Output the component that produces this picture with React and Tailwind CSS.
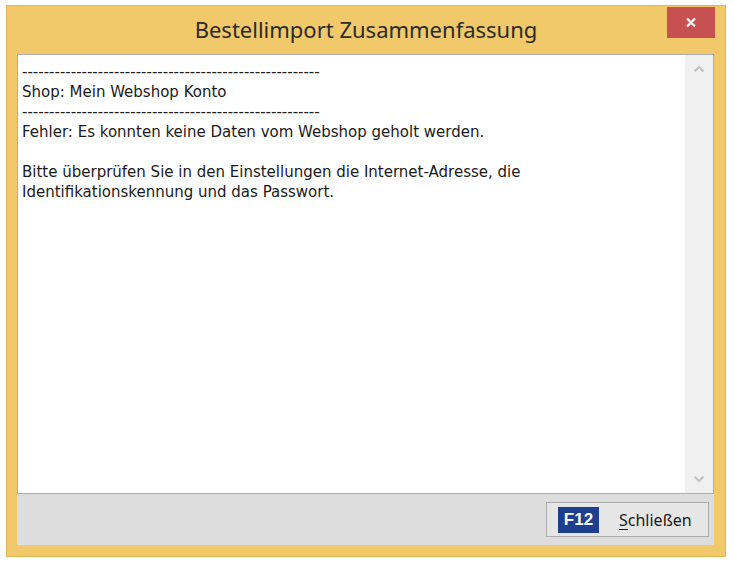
import React from 'react';

// Bestellimport summary dialog (Windows 8 style frame)
const dashes = "-".repeat(55);
const lines = [
    dashes,
    "Shop: Mein Webshop Konto",
    dashes,
    "Fehler: Es konnten keine Daten vom Webshop geholt werden.",
    "",
    "Bitte überprüfen Sie in den Einstellungen die Internet-Adresse, die",
    "Identifikationskennung und das Passwort.",
];

function Chevron({ down }) {
    return (
        <svg width="12" height="8" viewBox="0 0 12 8" className="text-[#c2c2c2]">
            <path
                d={down ? "M1.5 1.5 L6 6 L10.5 1.5" : "M1.5 6.5 L6 2 L10.5 6.5"}
                fill="none"
                stroke="currentColor"
                strokeWidth="2"
            />
        </svg>
    );
}

export default function App() {
    return (
        <div className="w-[734px] h-[564px] bg-white pt-[5px] pl-[6px]">
            <div className="w-[720px] h-[552px] bg-[#f1c86a] border border-[#dfb555] flex flex-col">
                {/* title bar */}
                <div className="relative h-[48px] flex items-center justify-center">
                    <span className="text-[22px] text-[#2b2b2b] font-['Noto_Sans',sans-serif] leading-none pb-[2px]">
                        Bestellimport Zusammenfassung
                    </span>
                    <div className="absolute top-[1px] right-[10px] w-[48px] h-[31px] bg-[#c75050] flex items-center justify-center">
                        <svg width="12" height="11" viewBox="0 0 12 11">
                            <path d="M2 1.5 L10 9.5 M10 1.5 L2 9.5" stroke="white" strokeWidth="2.2" />
                        </svg>
                    </div>
                </div>

                {/* body */}
                <div className="flex-1 ml-[10px] mr-[11px] flex flex-col">
                    <div className="flex-1 flex bg-white border border-[#abadb3]">
                        <div className="flex-1 pl-[4px] pt-[7px] font-['DejaVu_Sans',sans-serif] text-[15px] leading-[20px] text-[#1a1a1a]">
                            {lines.map((l, i) => (
                                <div key={i} className="h-[20px] whitespace-pre">{l}</div>
                            ))}
                        </div>
                        <div className="w-[28px] bg-[#f0f0f0] flex flex-col justify-between items-center py-[10px]">
                            <Chevron />
                            <Chevron down />
                        </div>
                    </div>
                    <div className="h-[51px] bg-[#dddddd] flex items-center justify-end pr-[5px]">
                        <button className="w-[163px] h-[35px] bg-[#e6e6e6] border border-[#adadad] flex items-center pl-[11px]">
                            <span className="w-[41px] h-[26px] bg-[#1d3f8e] text-white font-bold text-[17px] font-['Liberation_Sans',sans-serif] flex items-center justify-center">
                                F12
                            </span>
                            <span className="ml-[20px] text-[16px] text-[#1a1a1a] font-['Noto_Sans',sans-serif] leading-none">
                                <span className="underline underline-offset-[3px]">S</span>chließen
                            </span>
                        </button>
                    </div>
                </div>
                <div className="h-[11px]" />
            </div>
        </div>
    );
}
